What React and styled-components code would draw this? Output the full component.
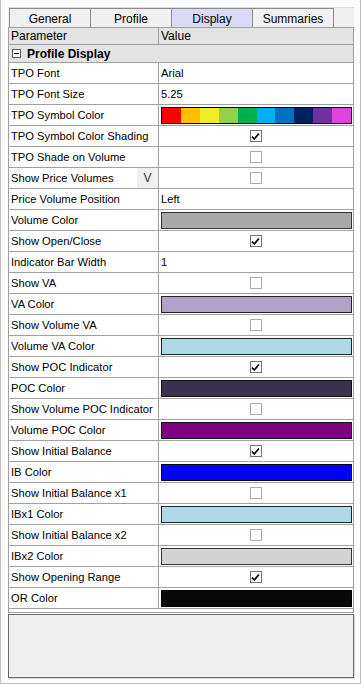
import React from "react";
import styled, { createGlobalStyle } from "styled-components";

const Global = createGlobalStyle`
  html, body { margin: 0; padding: 0; background: #ffffff; }
  body { font-family: "Liberation Sans", Arial, sans-serif; font-size: 11px; color: #000; }
  * { box-sizing: border-box; }
`;

const Window = styled.div`
  width: 361px;
  height: 684px;
  border: 1px solid #bdbdbd;
  border-top: none;
  background: #fcfcfc;
  padding: 7px 6px 0 7px;
  display: flex;
  flex-direction: column;
`;

const TabStrip = styled.div`
  display: flex;
  height: 20px;
  background: #f0f0f0;
  border-top: 1px solid #dadada;
  padding-left: 1px;
`;

const Tab = styled.div`
  width: 82px;
  height: 19px;
  border: 1px solid #8c8c8c;
  border-bottom: none;
  margin-left: ${(p) => (p.$first ? "0" : "-1px")};
  background: ${(p) => (p.$active ? "#dadaf6" : "#f0f0f0")};
  display: flex;
  align-items: center;
  justify-content: center;
  font-size: 12px;
  padding-top: 1px;
`;

const Grid = styled.div`
  width: 346px;
  height: 586px;
  border: 1px solid #a0a0a0;
  background: #ffffff;
  display: flex;
  flex-direction: column;
`;

const HeaderRow = styled.div`
  display: flex;
  height: 17px;
  background: #e3e3e3;
  border-bottom: 1px solid #a0a0a0;
`;

const HeaderCell = styled.div`
  width: ${(p) => (p.$label ? "150px" : "auto")};
  flex: ${(p) => (p.$label ? "none" : "1")};
  border-right: ${(p) => (p.$label ? "1px solid #a0a0a0" : "none")};
  padding-left: 2px;
  display: flex;
  align-items: center;
  font-size: 12px;
`;

const CategoryRow = styled.div`
  display: flex;
  align-items: center;
  height: 18px;
  background: #e3e3e3;
  border-bottom: 1px solid #a0a0a0;
  padding-left: 3px;
  font-weight: bold;
  font-size: 12px;
  gap: 6px;
`;

const Collapse = styled.div`
  width: 9px;
  height: 9px;
  border: 1px solid #5a5a5a;
  background: #ffffff;
  position: relative;
  &::after {
    content: "";
    position: absolute;
    left: 1px;
    right: 1px;
    top: 3px;
    height: 1px;
    background: #000;
  }
`;

const Row = styled.div`
  display: flex;
  height: 21px;
  border-bottom: 1px solid #a0a0a0;
`;

const LabelCell = styled.div`
  width: 150px;
  flex: none;
  border-right: 1px solid #a0a0a0;
  padding-left: 2px;
  display: flex;
  align-items: center;
  white-space: nowrap;
  overflow: hidden;
  font-size: 11.2px;
`;

const LabelText = styled.span`
  flex: 1;
`;

const VButton = styled.div`
  width: 21px;
  height: 100%;
  background: #f0f0f0;
  display: flex;
  align-items: center;
  justify-content: center;
  color: #333;
  font-size: 12px;
`;

const ValueCell = styled.div`
  flex: 1;
  display: flex;
  align-items: center;
  justify-content: ${(p) => (p.$center ? "center" : "flex-start")};
  padding-left: ${(p) => (p.$center ? "0" : "2px")};
  font-size: 11.2px;
`;

const Swatch = styled.div`
  flex: 1;
  align-self: stretch;
  margin: 2px 1px 1px 0;
  border: 1px solid ${(p) => p.$border || "#000"};
  background: ${(p) => p.$color};
`;

const Rainbow = styled.div`
  flex: 1;
  align-self: stretch;
  margin: 2px 1px 1px 0;
  border: 1px solid #000;
  display: flex;
`;

const Band = styled.div`
  flex: 1;
  background: ${(p) => p.$color};
`;

const Box = styled.div`
  width: 12px;
  height: 12px;
  border: 1px solid ${(p) => (p.$checked ? "#777" : "#aaa")};
  background: #fff;
  display: flex;
  align-items: center;
  justify-content: center;
  margin-right: 1px;
`;

const Description = styled.div`
  margin-top: 1px;
  width: 346px;
  height: 64px;
  border: 1px solid #6a6a6a;
  background: #f0f0f0;
  box-shadow: 1px 1px 0 #d8d8d8;
`;

const rainbow = [
  "#ff0000", "#ffc000", "#eeee22", "#92d050", "#00b050",
  "#00b0f0", "#0070c0", "#002060", "#7030a0", "#dd44dd",
];

const Check = ({ checked }) => (
  <Box $checked={checked}>
    {checked && (
      <svg width="9" height="9" viewBox="0 0 9 9">
        <path d="M1 4.5 L3.3 7 L8 1.5" stroke="#000" strokeWidth="1.8" fill="none" />
      </svg>
    )}
  </Box>
);

const rows = [
  { label: "TPO Font", text: "Arial" },
  { label: "TPO Font Size", text: "5.25" },
  { label: "TPO Symbol Color", rainbow: true },
  { label: "TPO Symbol Color Shading", check: true },
  { label: "TPO Shade on Volume", check: false },
  { label: "Show Price Volumes", check: false, vbtn: true },
  { label: "Price Volume Position", text: "Left" },
  { label: "Volume Color", color: "#a9a9a9", border: "#333" },
  { label: "Show Open/Close", check: true },
  { label: "Indicator Bar Width", text: "1" },
  { label: "Show VA", check: false },
  { label: "VA Color", color: "#b3a2c7", border: "#222" },
  { label: "Show Volume VA", check: false },
  { label: "Volume VA Color", color: "#add8e6", border: "#222" },
  { label: "Show POC Indicator", check: true },
  { label: "POC Color", color: "#3b3050", border: "#111" },
  { label: "Show Volume POC Indicator", check: false },
  { label: "Volume POC Color", color: "#800080", border: "#111" },
  { label: "Show Initial Balance", check: true },
  { label: "IB Color", color: "#0000ff", border: "#000" },
  { label: "Show Initial Balance x1", check: false },
  { label: "IBx1 Color", color: "#add8e6", border: "#222" },
  { label: "Show Initial Balance x2", check: false },
  { label: "IBx2 Color", color: "#d3d3d3", border: "#333" },
  { label: "Show Opening Range", check: true },
  { label: "OR Color", color: "#0a0a0a", border: "#000" },
];

const tabs = ["General", "Profile", "Display", "Summaries"];

export default function App() {
  return (
    <>
      <Global />
      <Window>
        <TabStrip>
          {tabs.map((t, i) => (
            <Tab key={t} $first={i === 0} $active={t === "Display"}>
              {t}
            </Tab>
          ))}
        </TabStrip>
        <Grid>
          <HeaderRow>
            <HeaderCell $label>Parameter</HeaderCell>
            <HeaderCell>Value</HeaderCell>
          </HeaderRow>
          <CategoryRow>
            <Collapse />
            <span>Profile Display</span>
          </CategoryRow>
          {rows.map((r) => (
            <Row key={r.label}>
              <LabelCell>
                <LabelText>{r.label}</LabelText>
                {r.vbtn && <VButton>V</VButton>}
              </LabelCell>
              <ValueCell $center={r.check !== undefined}>
                {r.text && r.text}
                {r.rainbow && (
                  <Rainbow>
                    {rainbow.map((c) => (
                      <Band key={c} $color={c} />
                    ))}
                  </Rainbow>
                )}
                {r.color && <Swatch $color={r.color} $border={r.border} />}
                {r.check !== undefined && <Check checked={r.check} />}
              </ValueCell>
            </Row>
          ))}
        </Grid>
        <Description />
      </Window>
    </>
  );
}
